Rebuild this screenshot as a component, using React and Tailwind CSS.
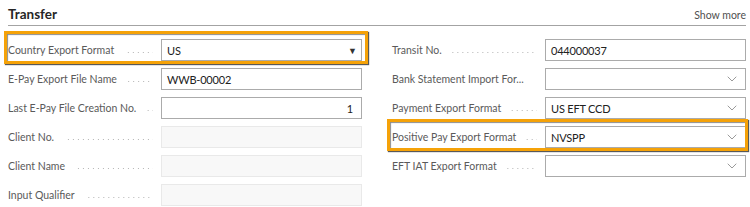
import React from "react";
import { ChevronDown } from "lucide-react";

const font = { fontFamily: '"Segoe UI", Lato, "Open Sans", sans-serif' };

function Leader() {
  return (
    <div className="flex-1 ml-[10px] mr-[8px] h-px translate-y-[2px] bg-[linear-gradient(to_right,#b4b4b4_1px,transparent_1px)] bg-[length:5px_1px] bg-repeat-x bg-[position:right_0]" />
  );
}

function Field({ label, value, kind = "text", align = "left", highlight }) {
  const disabled = kind === "disabled";
  return (
    <div className="relative flex items-center h-[22px]">
      <div className="w-[153px] flex items-center h-full shrink-0">
        <span className="text-[10.5px] text-[#5a5a5a] whitespace-nowrap leading-none">{label}</span>
        <Leader />
      </div>
      <div
        className={
          "flex-1 h-full flex items-center px-[5px] border " +
          (disabled
            ? "bg-[#f8f8f8] border-[#e9e9e9]"
            : "bg-white border-[#ababab]")
        }
      >
        <span
          className={
            "flex-1 text-[11px] tracking-[-0.2px] text-[#212121] leading-none " +
            (align === "right" ? "text-right pr-[3px]" : "")
          }
        >
          {value}
        </span>
        {kind === "triangle" && (
          <span className="text-[9px] text-[#333] leading-none mr-[-1px]">▼</span>
        )}
        {kind === "select" && (
          <ChevronDown size={16} strokeWidth={1} className="text-[#666]" />
        )}
      </div>
      {highlight === "left" && (
        <div className="absolute top-[-8px] bottom-[-3px] left-[-4px] right-[-6px] border-[3px] border-[#f5a208] shadow-[1px_1px_1px_rgba(0,0,0,0.65),inset_1px_1px_1px_rgba(0,0,0,0.45)] pointer-events-none" />
      )}
      {highlight === "right" && (
        <div className="absolute top-[-7px] bottom-[-3px] left-[-5px] right-[-2px] border-[3px] border-[#f5a208] shadow-[1px_1px_1px_rgba(0,0,0,0.65),inset_1px_1px_1px_rgba(0,0,0,0.45)] pointer-events-none" />
      )}
    </div>
  );
}

export default function App() {
  return (
    <div className="w-[750px] h-[207px] bg-white overflow-hidden pl-[8px] pr-[4px]" style={font}>
      <div className="h-[26px] flex items-end justify-between border-b border-[#a3a3a3] pb-[5px]">
        <span className="text-[13.5px] font-bold text-[#262626] leading-none mb-[-1px]">Transfer</span>
        <span className="text-[10.5px] text-[#505050] leading-none">Show more</span>
      </div>
      <div className="grid grid-cols-2 gap-x-[30px] mt-[13px]">
        <div className="flex flex-col gap-[7px]">
          <Field label="Country Export Format" value="US" kind="triangle" highlight="left" />
          <Field label="E-Pay Export File Name" value="WWB-00002" />
          <Field label="Last E-Pay File Creation No." value="1" align="right" />
          <Field label="Client No." value="" kind="disabled" />
          <Field label="Client Name" value="" kind="disabled" />
          <Field label="Input Qualifier" value="" kind="disabled" />
        </div>
        <div className="flex flex-col gap-[7px]">
          <Field label="Transit No." value="044000037" />
          <Field label="Bank Statement Import For..." value="" kind="select" />
          <Field label="Payment Export Format" value="US EFT CCD" kind="select" />
          <Field label="Positive Pay Export Format" value="NVSPP" kind="select" highlight="right" />
          <Field label="EFT IAT Export Format" value="" kind="select" />
        </div>
      </div>
    </div>
  );
}
